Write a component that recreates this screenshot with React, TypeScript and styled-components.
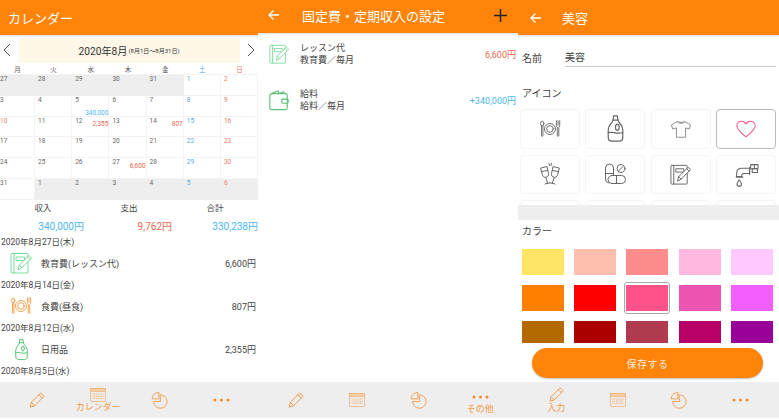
import React from "react";
import styled, { createGlobalStyle } from "styled-components";

const ORANGE = "#ff8409";
const TEXT = "#444";
const BLUE = "#4db8ee";
const RED = "#f0674f";
const SOFT = "#f59a45";

const GlobalStyle = createGlobalStyle`
  html, body {
    margin: 0;
    padding: 0;
    background: #fff;
    font-family: Roboto, "Noto Sans CJK JP", sans-serif;
    color: ${TEXT};
    overflow: hidden;
  }
  * { box-sizing: border-box; }
`;

const Page = styled.div`
  display: grid;
  grid-template-columns: 258px 260px 261px;
  width: 779px;
  height: 419px;
  overflow: hidden;
`;

const Screen = styled.section`
  display: flex;
  flex-direction: column;
  height: 419px;
  min-width: 0;
  overflow: hidden;
  background: #fff;
`;

const Header = styled.header<{ $h?: number; $left?: number; $lift?: number }>`
  flex: none;
  display: flex;
  align-items: center;
  height: ${(p) => p.$h ?? 35}px;
  background: ${ORANGE};
  color: #fff;
  box-shadow: 0 1px 2px rgba(0, 0, 0, 0.15);
  padding: 0 11px ${(p) => p.$lift ?? 0}px ${(p) => p.$left ?? 8}px;
`;

const Title = styled.h1<{ $gap?: number }>`
  margin: 0 0 0 ${(p) => p.$gap ?? 0}px;
  font-size: 13px;
  font-weight: 400;
  flex: 1;
  white-space: nowrap;
`;

const Body = styled.main`
  flex: 1;
  min-height: 0;
  overflow: hidden;
`;

const EditBody = styled(Body)`
  display: flex;
  flex-direction: column;
`;

const BottomNav = styled.nav`
  flex: none;
  display: grid;
  grid-template-columns: repeat(4, 61.5px);
  justify-content: center;
  height: 36px;
  margin-bottom: 1px;
  background: #eeeeee;
  color: ${SOFT};
`;

const NavItem = styled.div<{ $shift?: number }>`
  display: flex;
  flex-direction: column;
  align-items: center;
  justify-content: center;
  padding-top: ${(p) => p.$shift ?? 0}px;
  font-size: 9px;
  line-height: 11px;
  white-space: nowrap;
`;

/* calendar screen */
const MonthBar = styled.div`
  display: flex;
  align-items: center;
  justify-content: space-between;
  height: 26px;
  margin-top: 2px;
  padding: 0 3px;
`;

const MonthLabel = styled.div`
  width: 221px;
  height: 25px;
  background: #fff7e8;
  display: flex;
  align-items: center;
  justify-content: center;
  font-size: 10.2px;
  color: #333;
`;

const MonthRange = styled.small`
  font-size: 6px;
  margin-left: 1px;
`;

const Weekdays = styled.div`
  display: grid;
  grid-template-columns: 35px repeat(6, 37.2px);
  height: 10px;
  margin-top: 1px;
  font-size: 6.5px;
  line-height: 12px;
  text-align: center;
`;

const Weekday = styled.span<{ $c?: string }>`
  color: ${(p) => p.$c ?? "#555"};
`;

const CalGrid = styled.div`
  display: grid;
  grid-template-columns: 35px repeat(6, 37.2px);
  grid-auto-rows: 20.8px;
  background: #f4f4f4;
  padding-top: 1px;
`;

const Cell = styled.div<{ $off?: boolean; $edge?: boolean }>`
  display: flex;
  flex-direction: column;
  background: ${(p) => (p.$off ? "#eeeeee" : "#fff")};
  margin: ${(p) => (p.$off ? "0" : "0 1px 1px 0")};
  padding: 0 0 0 ${(p) => (p.$edge ? 0 : 3)}px;
  min-width: 0;
  font-size: 6.5px;
  line-height: 9px;
`;

const DayNum = styled.span<{ $c?: string }>`
  color: ${(p) => p.$c ?? "#666"};
`;

const DayAmount = styled.span<{ $c: string; $top: number }>`
  align-self: flex-end;
  margin-top: ${(p) => p.$top}px;
  color: ${(p) => p.$c};
  font-size: 6.5px;
  line-height: 8px;
  white-space: nowrap;
`;

const Totals = styled.div`
  display: grid;
  grid-template-columns: repeat(3, 1fr);
  padding: 2px 0 2px;
  text-align: center;
`;

const TotalHead = styled.span`
  font-size: 8.5px;
  line-height: 12px;
  color: #444;
`;

const TotalValue = styled.span<{ $c: string; $right?: number }>`
  font-size: 10px;
  line-height: 14px;
  margin-top: 6px;
  padding-right: ${(p) => p.$right ?? 0}px;
  text-align: right;
  color: ${(p) => p.$c};
  white-space: nowrap;
`;

const DateRow = styled.div`
  font-size: 8.5px;
  line-height: 12px;
  padding-left: 1px;
  color: #444;
`;

const TxRow = styled.div`
  display: flex;
  align-items: center;
  height: 31px;
  font-size: 9px;
  padding: 0 2px 0 9px;
`;

const TxIcon = styled.span`
  display: flex;
  justify-content: center;
  width: 24px;
`;

const TxName = styled.span`
  flex: 1;
  margin-left: 8px;
`;

/* fixed cost screen */
const FixedList = styled.div`
  margin-top: -2px;
`;

const FixedRow = styled.div`
  display: flex;
  align-items: center;
  height: 46px;
  padding: 0 2px 0 10px;
`;

const FixedText = styled.div`
  flex: 1;
  margin-left: 10px;
  font-size: 9px;
  line-height: 12.5px;
`;

const FixedAmount = styled.span<{ $c: string }>`
  font-size: 9px;
  color: ${(p) => p.$c};
`;

/* category editor screen */
const NameRow = styled.div`
  flex: none;
  display: flex;
  align-items: flex-end;
  height: 32px;
  padding: 0 3px 0 4px;
  font-size: 10px;
  line-height: 14px;
`;

const NameLabel = styled.span`
  width: 43px;
  padding-bottom: 1px;
`;

const NameInput = styled.div`
  flex: 1;
  height: 16px;
  border-bottom: 1px solid #c8c8c8;
`;

const SectionLabel = styled.div<{ $top: number }>`
  flex: none;
  font-size: 10px;
  line-height: 14px;
  padding: ${(p) => p.$top}px 0 0 4px;
`;

const IconGrid = styled.div`
  flex: none;
  display: grid;
  grid-template-columns: repeat(4, 60px);
  column-gap: 5.5px;
  grid-auto-rows: 39.5px;
  row-gap: 6px;
  padding: 8px 0 0 1.5px;
  height: 104px;
  overflow: hidden;
`;

const IconCard = styled.div<{ $on?: boolean }>`
  display: flex;
  align-items: center;
  justify-content: center;
  border: ${(p) => (p.$on ? "1.5px solid #bbbbbb" : "1px solid #f5f5f5")};
  border-radius: 4px;
  color: #666;
`;

const CutIcon = styled.div`
  width: 11px;
  height: 30px;
  border: 1px solid #bbb;
  border-radius: 1px;
`;

const Divider = styled.div`
  flex: none;
  height: 15px;
  background: #eeeeee;
`;

const SwatchWrap = styled.div`
  position: relative;
  flex: 1;
  min-height: 0;
`;

const SwatchGrid = styled.div`
  display: grid;
  grid-template-columns: repeat(5, 42px);
  column-gap: 10.2px;
  grid-auto-rows: 25.5px;
  row-gap: 10.5px;
  padding: 10px 0 0 4px;
  height: 104px;
  overflow: hidden;
`;

const Swatch = styled.div<{ $c: string; $on?: boolean }>`
  position: relative;
  background: ${(p) => p.$c};
  &::after {
    content: "";
    position: absolute;
    inset: -3px -2px;
    border: ${(p) => (p.$on ? "1px solid #a8a8a8" : "0")};
    border-radius: 3px;
  }
`;

const SaveButton = styled.button`
  position: absolute;
  left: 14px;
  bottom: 4px;
  width: 231px;
  height: 30px;
  border: 0;
  border-radius: 15px;
  background: ${ORANGE};
  color: #ffeedd;
  font: inherit;
  font-size: 10px;
  letter-spacing: 0.5px;
  box-shadow: 0 1px 2px rgba(0, 0, 0, 0.25);
`;

type IconProps = { size?: number; color?: string };

const Svg = ({ size = 24, color = "currentColor", children, sw = 1 }: IconProps & { children: React.ReactNode; sw?: number }) => (
  <svg width={size} height={size} viewBox="0 0 24 24" fill="none" stroke={color} strokeWidth={sw} strokeLinecap="round" strokeLinejoin="round">
    {children}
  </svg>
);

const NoteIcon = (p: IconProps) => (
  <Svg {...p}>
    <rect x="2" y="2.5" width="17" height="19.5" rx="1" />
    <path d="M5 2.500V22" />
    <path d="M7.500 6h8v3.500h-8z" />
    <path d="M9 18.500l1.200-4.300L20 4.500l2.500 2.500-9.700 9.800z" fill="#fff" />
    <path d="M18.500 6l2.500 2.500M10.200 14.200l2.600 2.600" />
  </Svg>
);

const CutleryIcon = (p: IconProps) => (
  <Svg {...p}>
    <ellipse cx="3.500" cy="6" rx="1.800" ry="2.600" />
    <path d="M2.700 8.500v11a.9.9 0 0 0 1.600 0v-11" />
    <circle cx="12" cy="12" r="6" />
    <circle cx="12" cy="12" r="3.600" />
    <path d="M19 3v5.500c0 1 .7 1.500 1 1.800v9.200a.9.9 0 0 0 1.600 0v-9.200c.4-.3 1-.8 1-1.800V3M20.800 3v5" />
  </Svg>
);

const BottleIcon = (p: IconProps) => (
  <Svg {...p}>
    <path d="M10.500 1.500h3l.5 3.500h-4z" />
    <path d="M10 5c-.3 2.500-4 3.500-4 8v6.500C6 21.500 7.500 22.500 9 22.500h6c1.500 0 3-1 3-3V13c0-4.500-3.700-5.500-4-8" />
    <ellipse cx="13.500" cy="11" rx="1.500" ry="2.600" />
    <path d="M6 15.500c3-1.500 6.500 1.500 12 0" />
  </Svg>
);

const ShirtIcon = (p: IconProps) => (
  <Svg {...p} color="#888">
    <path d="M8 4L1.500 7.500l1.500 4.500 4-1.200V21h10V10.800l4 1.200 1.500-4.500L16 4c-1 2.500-7 2.500-8 0z" />
    <path d="M8 4c1.500 1 6.500 1 8 0" />
  </Svg>
);

const HeartIcon = (p: IconProps) => (
  <Svg {...p} sw={1.100}>
    <path d="M12 20.500C6 16 2 12.500 2 8.500 2 5.500 4.300 3.500 7 3.500c2 0 4 1.200 5 3.200 1-2 3-3.200 5-3.200 2.700 0 5 2 5 5 0 4-4 7.500-10 12z" />
  </Svg>
);

const CheersIcon = (p: IconProps) => (
  <Svg {...p}>
    <path d="M3 6l6-1.500 1.500 7c.4 2-1 3.500-2.500 3.800-1.600.3-3.200-.6-3.600-2.600z" />
    <path d="M8 16l1.500 5M7 22l5-1.200" />
    <path d="M21 6l-6-1.500-1.500 7c-.4 2 1 3.500 2.500 3.800 1.600.3 3.200-.6 3.600-2.600z" />
    <path d="M16 16l-1.500 5M17 22l-5-1.200" />
    <path d="M11 1.500l.5 2M13.500 1.500l-.5 2M4 9.500l5.500-1M14.500 8.500l5.500 1" />
  </Svg>
);

const PillsIcon = (p: IconProps) => (
  <Svg {...p}>
    <path d="M2.500 13V6a4 4 0 0 1 8 0v7" />
    <path d="M2.500 11.500h8" />
    <path d="M2.500 13v4a4 4 0 0 0 3 4" />
    <circle cx="18" cy="6.500" r="4" />
    <path d="M16 8.500l4-4" />
    <rect x="5" y="13.500" width="17.500" height="8" rx="4" />
    <path d="M13.500 13.500v8" />
  </Svg>
);

const FaucetIcon = (p: IconProps) => (
  <Svg {...p}>
    <path d="M2.500 14v-3c0-3 2-5 5-5H15v5H9.500c-1.500 0-2 .8-2 2v1z" />
    <path d="M15 5v7M17.500 6.500h5v3.500h-5z" />
    <path d="M16 2.500h3.500v4H16zM19.500 2.500H23v4h-3.500z" />
    <path d="M2 14.500h6.500" />
    <path d="M5 17c-1.500 2-2.200 3-2.200 4.200a2.200 2.200 0 0 0 4.400 0C7.200 20 6.500 19 5 17z" />
  </Svg>
);

const WalletIcon = (p: IconProps) => (
  <Svg {...p} sw={1.200}>
    <path d="M4 5l7-3 1 3M12 5l5-2 1 2" />
    <rect x="2" y="5" width="19" height="17.500" rx="2" />
    <rect x="15" y="11" width="7" height="4.500" rx="1" />
  </Svg>
);

const PencilIcon = ({ size = 18 }: IconProps) => (
  <Svg size={size} sw={1.300}>
    <path d="M3 21l1.500-6L17 2.500l4.500 4.500L9 19.500z" />
    <path d="M14.500 5l4.500 4.500M4.500 15L9 19.500" />
  </Svg>
);

const CalendarIcon = () => (
  <svg width="16" height="14" viewBox="0 0 16 14" fill="none" stroke={SOFT} strokeWidth="0.700" opacity="0.75">
    <rect x="0.500" y="0.500" width="15" height="13" rx="0.500" />
    <rect x="0.500" y="0.500" width="15" height="3" fill="#f9c792" />
    <path d="M2.500 6h11M2.500 8.200h11M2.500 10.400h11" strokeDasharray="1 0.700" strokeWidth="1" />
  </svg>
);

const PieIcon = () => (
  <Svg size={18} sw={1.200}>
    <path d="M12.500 5A9 9 0 1 1 3.500 14h9z" />
    <path d="M10 2A8.500 8.500 0 0 0 1.500 10.500H10z" />
  </Svg>
);

const DotsIcon = () => (
  <svg width="17" height="14" viewBox="0 0 17 14" fill="#f28a2c">
    <circle cx="2" cy="7" r="1.500" />
    <circle cx="8.500" cy="7" r="1.500" />
    <circle cx="15" cy="7" r="1.500" />
  </svg>
);

const BackArrow = () => (
  <svg width="12" height="12" viewBox="0 0 12 12" fill="none" stroke="#fff" strokeWidth="1.300">
    <path d="M11 6H1.500M5.500 1.500L1 6l4.500 4.500" />
  </svg>
);

const Chevron = ({ flip }: { flip?: boolean }) => (
  <svg width="8" height="14" viewBox="0 0 8 14" fill="none" stroke="#555" strokeWidth="1">
    <path d={flip ? "M1 1l6 6-6 6" : "M7 1L1 7l6 6"} />
  </svg>
);

const PlusIcon = () => (
  <svg width="13" height="13" viewBox="0 0 13 13" stroke="#222" strokeWidth="1.500">
    <path d="M6.500 0v13M0 6.500h13" />
  </svg>
);

const Nav = ({ label }: { label: number }) => {
  const items = [
    { icon: <PencilIcon size={label === 0 ? 17 : 18} />, text: "入力", shift: 0 },
    { icon: <CalendarIcon />, text: "カレンダー", shift: 0 },
    { icon: <PieIcon />, text: "", shift: 0 },
    { icon: <DotsIcon />, text: "その他", shift: 5 },
  ];
  return (
    <BottomNav>
      {items.map((it, i) => (
        <NavItem key={i} $shift={label === i ? it.shift : 0}>
          {it.icon}
          {label === i ? <span>{it.text}</span> : null}
        </NavItem>
      ))}
    </BottomNav>
  );
};

type Day = { n: number; off?: boolean; amount?: string; c?: string; top?: number };

const BLUE_DAY = "#5aa8e6";
const RED_DAY = "#ee7b6c";

const weeks: Day[][] = [
  [{ n: 27, off: true }, { n: 28, off: true }, { n: 29, off: true }, { n: 30, off: true }, { n: 31, off: true }, { n: 1 }, { n: 2 }],
  [{ n: 3 }, { n: 4 }, { n: 5, amount: "340,000", c: BLUE, top: 4 }, { n: 6 }, { n: 7 }, { n: 8 }, { n: 9 }],
  [{ n: 10 }, { n: 11 }, { n: 12, amount: "2,355", c: RED, top: -6 }, { n: 13 }, { n: 14, amount: "807", c: RED, top: -6 }, { n: 15 }, { n: 16 }],
  [{ n: 17 }, { n: 18 }, { n: 19 }, { n: 20 }, { n: 21 }, { n: 22 }, { n: 23 }],
  [{ n: 24 }, { n: 25 }, { n: 26 }, { n: 27, amount: "6,600", c: RED, top: -5 }, { n: 28 }, { n: 29 }, { n: 30 }],
  [{ n: 31 }, { n: 1, off: true }, { n: 2, off: true }, { n: 3, off: true }, { n: 4, off: true }, { n: 5, off: true }, { n: 6, off: true }],
];

const dayColor = (col: number, row: number) => {
  if (col === 5) return BLUE_DAY;
  if (col === 6) return RED_DAY;
  if (col === 0 && row === 2) return RED_DAY;
  return undefined;
};

const CalendarScreen = () => (
  <Screen>
    <Header>
      <Title>カレンダー</Title>
    </Header>
    <Body>
      <MonthBar>
        <Chevron />
        <MonthLabel>
          2020年8月<MonthRange>(8月1日〜8月31日)</MonthRange>
        </MonthLabel>
        <Chevron flip />
      </MonthBar>
      <Weekdays>
        <Weekday>月</Weekday>
        <Weekday>火</Weekday>
        <Weekday>水</Weekday>
        <Weekday>木</Weekday>
        <Weekday>金</Weekday>
        <Weekday $c={BLUE_DAY}>土</Weekday>
        <Weekday $c={RED_DAY}>日</Weekday>
      </Weekdays>
      <CalGrid>
        {weeks.map((w, r) =>
          w.map((d, c) => (
            <Cell key={`${r}-${c}`} $off={d.off} $edge={c === 0}>
              <DayNum $c={dayColor(c, r)}>{d.n}</DayNum>
              {d.amount ? (
                <DayAmount $c={d.c as string} $top={d.top as number}>
                  {d.amount}
                </DayAmount>
              ) : null}
            </Cell>
          ))
        )}
      </CalGrid>
      <Totals>
        <TotalHead>収入</TotalHead>
        <TotalHead>支出</TotalHead>
        <TotalHead>合計</TotalHead>
        <TotalValue $c={BLUE} $right={2}>340,000円</TotalValue>
        <TotalValue $c={RED}>9,762円</TotalValue>
        <TotalValue $c={BLUE}>330,238円</TotalValue>
      </Totals>
      <DateRow>2020年8月27日(木)</DateRow>
      <TxRow>
        <TxIcon><NoteIcon size={24} color="#7bdc9c" /></TxIcon>
        <TxName>教育費(レッスン代)</TxName>
        <span>6,600円</span>
      </TxRow>
      <DateRow>2020年8月14日(金)</DateRow>
      <TxRow>
        <TxIcon><CutleryIcon size={22} color={SOFT} /></TxIcon>
        <TxName>食費(昼食)</TxName>
        <span>807円</span>
      </TxRow>
      <DateRow>2020年8月12日(水)</DateRow>
      <TxRow>
        <TxIcon><BottleIcon size={23} color="#4fc26f" /></TxIcon>
        <TxName>日用品</TxName>
        <span>2,355円</span>
      </TxRow>
      <DateRow>2020年8月5日(水)</DateRow>
    </Body>
    <Nav label={1} />
  </Screen>
);

const FixedScreen = () => (
  <Screen>
    <Header $h={33} $left={10} $lift={3}>
      <BackArrow />
      <Title $gap={22}>固定費・定期収入の設定</Title>
      <PlusIcon />
    </Header>
    <Body>
      <FixedList>
        <FixedRow>
          <NoteIcon size={22} color="#7bdc9c" />
          <FixedText>
            レッスン代
            <br />
            教育費／毎月
          </FixedText>
          <FixedAmount $c={RED}>6,600円</FixedAmount>
        </FixedRow>
        <FixedRow>
          <WalletIcon size={22} color="#5cbf7c" />
          <FixedText>
            給料
            <br />
            給料／毎月
          </FixedText>
          <FixedAmount $c={BLUE}>+340,000円</FixedAmount>
        </FixedRow>
      </FixedList>
    </Body>
    <Nav label={3} />
  </Screen>
);

const swatches = [
  "#ffe566", "#ffbfae", "#ff8c8c", "#ffb9e0", "#ffc8ff",
  "#ff8000", "#ff0000", "#ff5288", "#ee55b3", "#f45eff",
  "#b36800", "#aa0000", "#b03a4e", "#b80066", "#990099",
];

const EditScreen = () => (
  <Screen>
    <Header $left={12}>
      <BackArrow />
      <Title $gap={20}>美容</Title>
    </Header>
    <EditBody>
      <NameRow>
        <NameLabel>名前</NameLabel>
        <NameInput>美容</NameInput>
      </NameRow>
      <SectionLabel $top={20}>アイコン</SectionLabel>
      <IconGrid>
        <IconCard><CutleryIcon size={22} /></IconCard>
        <IconCard><BottleIcon size={29} /></IconCard>
        <IconCard><ShirtIcon size={22} /></IconCard>
        <IconCard $on><HeartIcon size={22} color="#f2558c" /></IconCard>
        <IconCard><CheersIcon size={24} /></IconCard>
        <IconCard><PillsIcon size={24} /></IconCard>
        <IconCard><NoteIcon size={23} /></IconCard>
        <IconCard><FaucetIcon size={25} /></IconCard>
        <IconCard><CutIcon /></IconCard>
        <IconCard><CutIcon /></IconCard>
        <IconCard />
        <IconCard />
      </IconGrid>
      <Divider />
      <SwatchWrap>
        <SectionLabel $top={5}>カラー</SectionLabel>
        <SwatchGrid>
          {swatches.map((c, i) => (
            <Swatch key={c} $c={c} $on={i === 7} />
          ))}
        </SwatchGrid>
        <SaveButton>保存する</SaveButton>
      </SwatchWrap>
    </EditBody>
    <Nav label={0} />
  </Screen>
);

export default function App() {
  return (
    <>
      <GlobalStyle />
      <Page>
        <CalendarScreen />
        <FixedScreen />
        <EditScreen />
      </Page>
    </>
  );
}
